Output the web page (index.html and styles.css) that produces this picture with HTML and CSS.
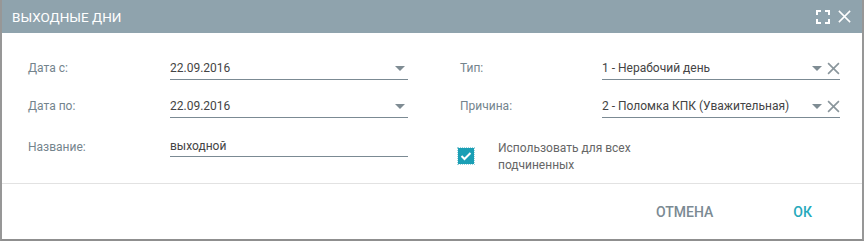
FILE: index.html
```html
<!DOCTYPE html>
<html lang="ru">
<head>
    <meta charset="UTF-8">
    <title>Выходные дни</title>
    <link rel="stylesheet" href="styles.css">
</head>
<body>
<div class="dialog">
    <!-- Заголовок окна -->
    <div class="dialog-header">
        <span class="dialog-title">ВЫХОДНЫЕ ДНИ</span>
        <div class="header-tools">
            <svg class="tool" width="14" height="14" viewBox="0 0 14 14">
                <path d="M1 5V1h4M9 1h4v4M13 9v4H9M5 13H1V9" fill="none" stroke="#fff" stroke-width="2"/>
            </svg>
            <svg class="tool" width="15" height="15" viewBox="0 0 16 16">
                <path d="M2 2L14 14M14 2L2 14" fill="none" stroke="#fff" stroke-width="1.6"/>
            </svg>
        </div>
    </div>

    <!-- Форма -->
    <div class="dialog-body">
        <div class="col">
            <div class="row">
                <label>Дата с:</label>
                <div class="field">
                    <span class="value">22.09.2016</span>
                    <span class="arrow"></span>
                </div>
            </div>
            <div class="row">
                <label>Дата по:</label>
                <div class="field">
                    <span class="value">22.09.2016</span>
                    <span class="arrow"></span>
                </div>
            </div>
            <div class="row last">
                <label>Название:</label>
                <div class="field">
                    <span class="value">выходной</span>
                </div>
            </div>
        </div>
        <div class="col">
            <div class="row">
                <label>Тип:</label>
                <div class="field">
                    <span class="value">1 - Нерабочий день</span>
                    <span class="arrow"></span>
                    <svg class="clear" width="13" height="13" viewBox="0 0 12 12">
                        <path d="M1 1L11 11M11 1L1 11" fill="none" stroke="#8a969c" stroke-width="1.5"/>
                    </svg>
                </div>
            </div>
            <div class="row">
                <label>Причина:</label>
                <div class="field">
                    <span class="value">2 - Поломка КПК (Уважительная)</span>
                    <span class="arrow"></span>
                    <svg class="clear" width="13" height="13" viewBox="0 0 12 12">
                        <path d="M1 1L11 11M11 1L1 11" fill="none" stroke="#8a969c" stroke-width="1.5"/>
                    </svg>
                </div>
            </div>
            <div class="check-row">
                <span class="checkbox">
                    <svg width="12" height="10" viewBox="0 0 12 10">
                        <path d="M1.5 5L4.5 8L10.5 2" fill="none" stroke="#fff" stroke-width="2"/>
                    </svg>
                </span>
                <span class="check-label">Использовать для всех<br>подчиненных</span>
            </div>
        </div>
    </div>

    <!-- Кнопки -->
    <div class="dialog-footer">
        <a href="#" class="btn cancel">ОТМЕНА</a>
        <a href="#" class="btn ok">ОК</a>
    </div>
</div>
</body>
</html>
```

FILE: styles.css
```css
/* Общие стили */
body {
    font-family: Roboto, "Open Sans", sans-serif;
    margin: 0;
    padding: 0;
    background-color: #fff;
    color: #333;
}

.dialog {
    width: 860px;
    height: 239px;
    border-left: 2px solid #979797;
    border-right: 2px solid #979797;
    border-bottom: 2px solid #8f8f8f;
    background-color: #fff;
    display: flex;
    flex-direction: column;
}

/* Заголовок */
.dialog-header {
    height: 33px;
    background-color: #8fa3ad;
    display: flex;
    align-items: center;
    justify-content: space-between;
    padding: 0 10px 0 10px;
}

.dialog-title {
    color: #fff;
    font-size: 13.5px;
}

.header-tools {
    display: flex;
    align-items: center;
    gap: 7px;
}

/* Форма */
.dialog-body {
    display: flex;
    padding: 9px 0 0 24px;
    height: 141px;
    border-bottom: 1px solid #e2e2e2;
}

.col {
    flex-shrink: 0;
    width: 432px;
}

.col + .col {
    width: 404px;
}

.row {
    display: flex;
    align-items: flex-end;
    height: 38px;
}

.row.last {
    height: 39px;
}

.row label {
    box-sizing: border-box;
    width: 144px;
    padding-left: 2px;
    font-size: 12px;
    line-height: 17px;
    color: #74848d;
    padding-bottom: 3px;
}

.row.last label {
    padding-bottom: 1px;
}

.field {
    width: 238px;
    height: 22px;
    border-bottom: 1px solid #7b8a93;
    display: flex;
    align-items: center;
    font-size: 12px;
    color: #444;
}

.row.last .field {
    height: 20px;
}

.field .value {
    flex: 1;
}

.arrow {
    width: 0;
    height: 0;
    border-left: 5px solid transparent;
    border-right: 5px solid transparent;
    border-top: 5px solid #7f8c93;
    margin-right: 3px;
}

.clear {
    margin-left: 2px;
}

/* Флажок */
.check-row {
    display: flex;
    align-items: flex-start;
    margin-top: 30px;
}

.checkbox {
    width: 16px;
    height: 16px;
    background-color: #1a9fb5;
    outline: 1px dotted #9fd3dc;
    display: flex;
    align-items: center;
    justify-content: center;
    margin-right: 24px;
}

.check-label {
    font-size: 12px;
    color: #666;
    line-height: 17px;
    margin-top: -8px;
}

/* Кнопки */
.dialog-footer {
    flex: 1;
    display: flex;
    justify-content: flex-end;
    align-items: center;
    padding-right: 50px;
    gap: 80px;
}

.btn {
    text-decoration: none;
    font-size: 14px;
    font-weight: 500;
}

.btn.cancel {
    color: #7b8a93;
}

.btn.ok {
    color: #25a9bb;
}
```
